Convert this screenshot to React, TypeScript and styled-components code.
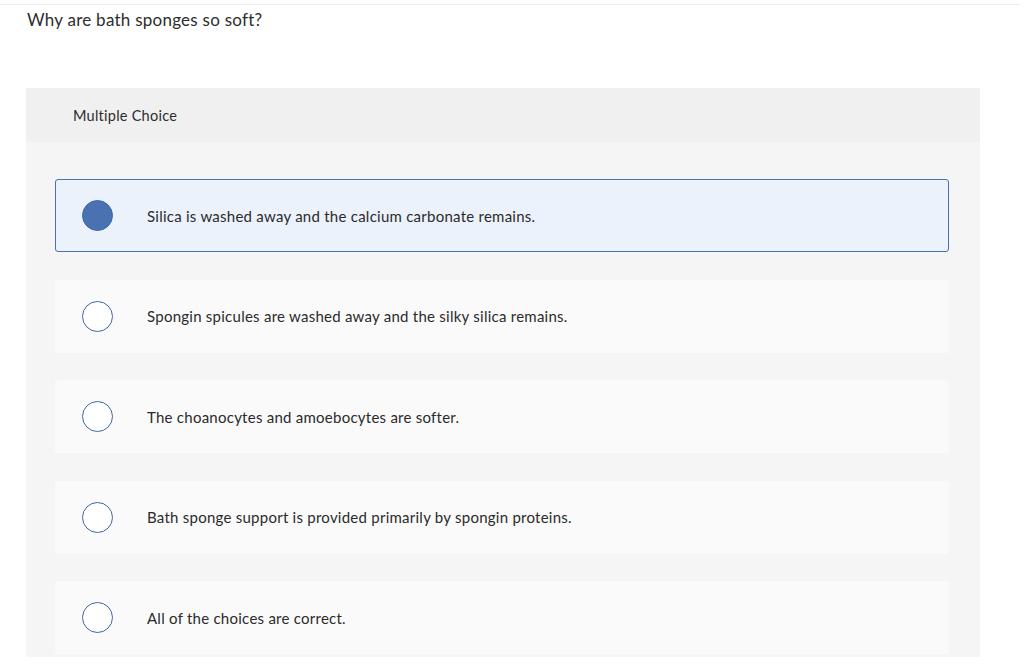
import styled, { createGlobalStyle } from 'styled-components';

const GlobalStyle = createGlobalStyle`
  html, body {
    margin: 0;
    padding: 0;
    background: #ffffff;
  }

  body {
    font-family: Lato, "Open Sans", Arial, sans-serif;
    color: #2b2b2b;
  }
`;

const Page = styled.div`
  padding-top: 4px;
`;

const Rule = styled.div`
  height: 1px;
  margin-right: 4px;
  background: #ededed;
`;

const Question = styled.p`
  margin: 0;
  padding: 5px 0 0 27px;
  font-size: 17px;
  letter-spacing: 0.25px;
  line-height: 20px;
  color: #2d2d2d;
`;

const Panel = styled.section`
  width: 954px;
  margin: 58px 0 0 26px;
  background: #f5f5f5;
`;

const Header = styled.div`
  display: flex;
  align-items: center;
  height: 54px;
  padding-left: 47px;
  background: #f0f0f0;
  font-size: 14.5px;
  letter-spacing: 0.25px;
  color: #2d2d2d;
`;

const Choices = styled.div`
  display: flex;
  flex-direction: column;
  gap: 27.5px;
  padding: 37px 31px 3px 29px;
`;

const Choice = styled.label<{ $selected?: boolean }>`
  box-sizing: border-box;
  display: flex;
  align-items: center;
  gap: 34px;
  height: 73px;
  padding-left: ${p => (p.$selected ? 26 : 27)}px;
  border-radius: 3px;
  background: ${p => (p.$selected ? '#ebf2fb' : '#fafafa')};
  border: ${p => (p.$selected ? '1px solid #4a72b2' : 'none')};
  cursor: pointer;
`;

const Radio = styled.span<{ $checked?: boolean }>`
  box-sizing: border-box;
  flex: none;
  width: 31px;
  height: 31px;
  border-radius: 50%;
  border: 1.5px solid #3f67a6;
  background: ${p => (p.$checked ? '#4a72b2' : '#ffffff')};
`;

const ChoiceText = styled.span`
  font-size: 15px;
  letter-spacing: 0.25px;
  color: #2b2b2b;
`;

const choices = [
  'Silica is washed away and the calcium carbonate remains.',
  'Spongin spicules are washed away and the silky silica remains.',
  'The choanocytes and amoebocytes are softer.',
  'Bath sponge support is provided primarily by spongin proteins.',
  'All of the choices are correct.',
];

const App = () => {
  const selected = 0;

  return (
    <>
      <GlobalStyle />
      <Page>
        <Rule />
        <Question>Why are bath sponges so soft?</Question>
        <Panel>
          <Header>Multiple Choice</Header>
          <Choices>
            {choices.map((text, i) => (
              <Choice key={text} $selected={i === selected}>
                <Radio $checked={i === selected} />
                <ChoiceText>{text}</ChoiceText>
              </Choice>
            ))}
          </Choices>
        </Panel>
      </Page>
    </>
  );
};

export default App;
